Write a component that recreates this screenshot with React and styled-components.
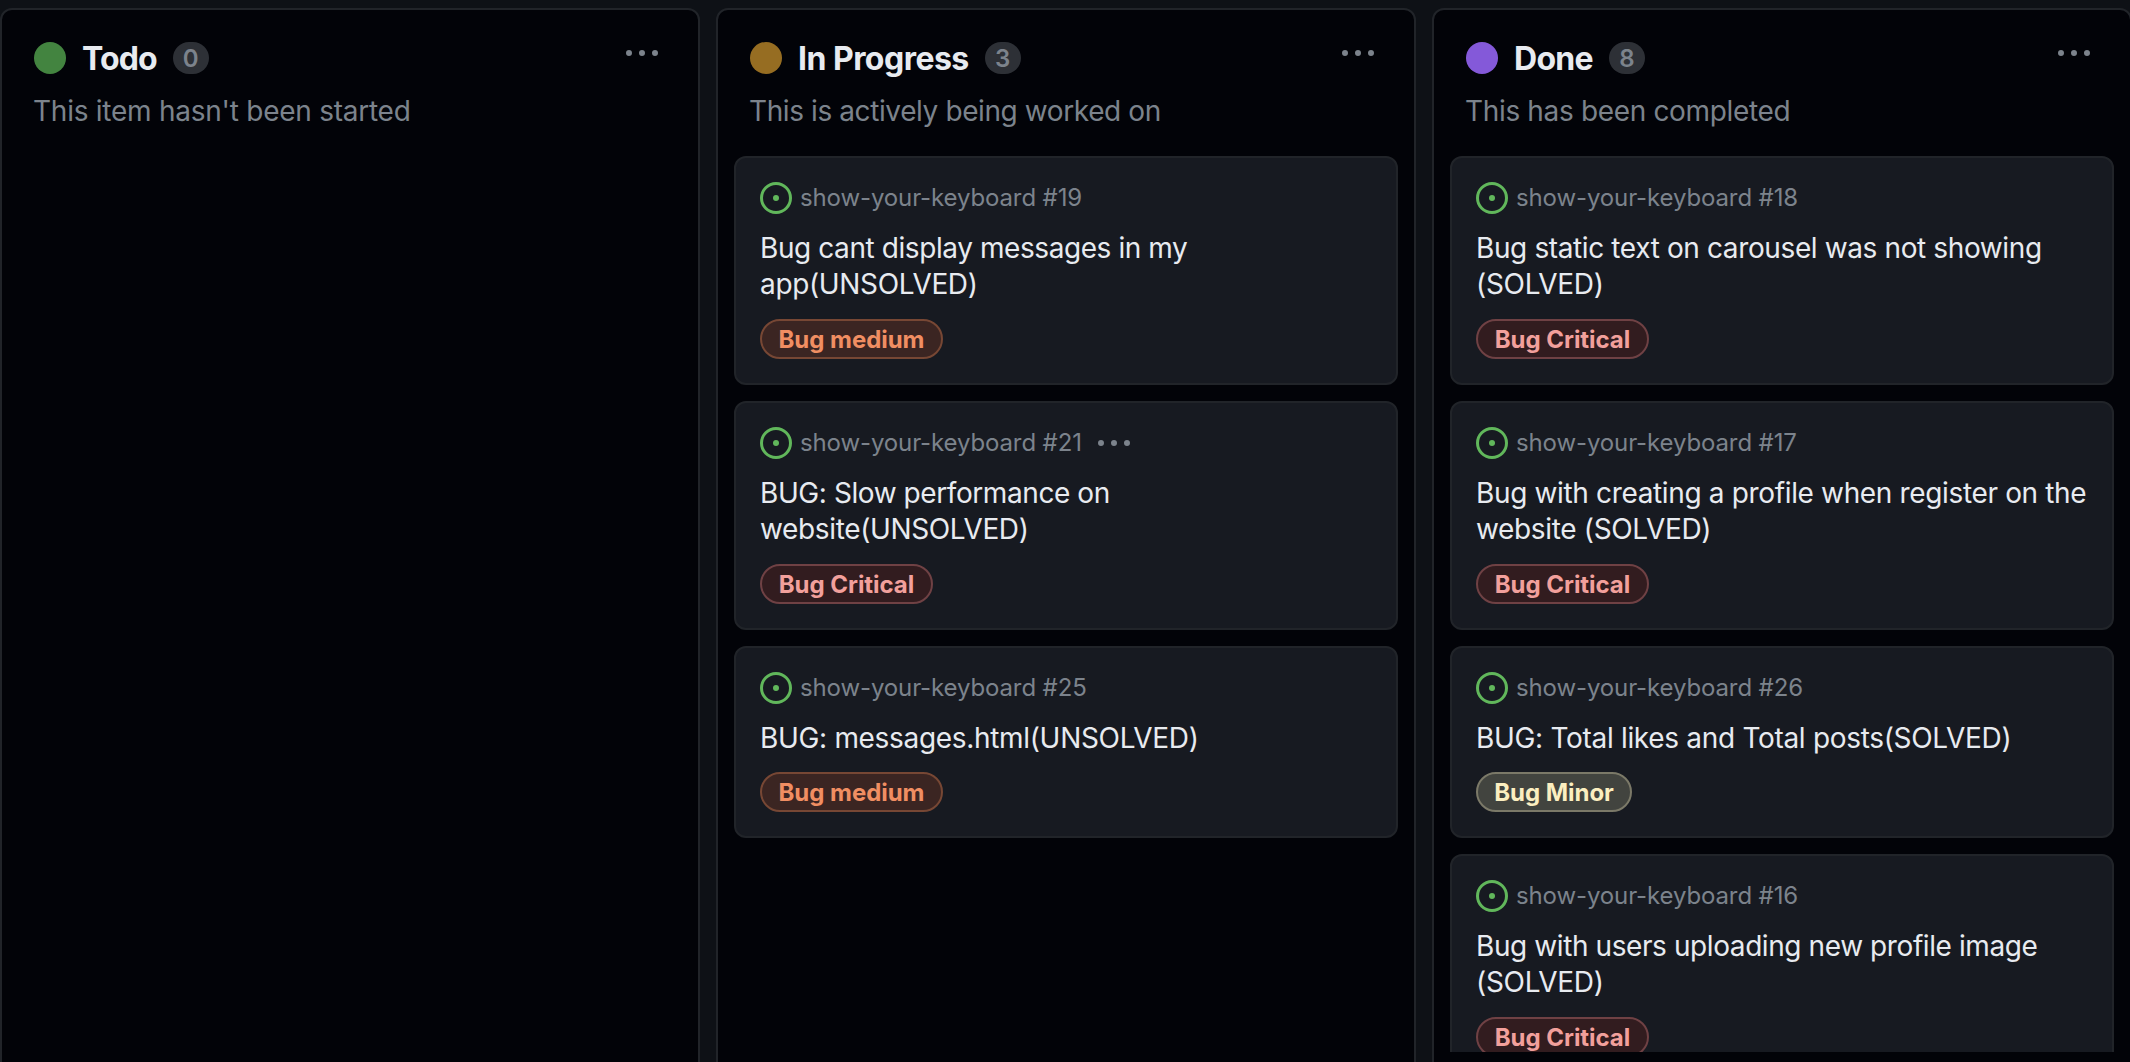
import React from 'react';
import styled, { createGlobalStyle } from 'styled-components';

const GlobalStyle = createGlobalStyle`
  * { box-sizing: border-box; }
  html, body { margin: 0; padding: 0; background: #0e1116; overflow: hidden; }
  body { font-family: Inter, "Liberation Sans", sans-serif; -webkit-font-smoothing: antialiased; }
`;

const Board = styled.main`
  display: flex;
  gap: 16px;
  width: 2132px;
  height: 1062px;
  padding-top: 8px;
`;

const Column = styled.section`
  display: flex;
  flex-direction: column;
  flex: 0 0 700px;
  min-width: 0;
  height: 1070px;
  background: #020308;
  border: 2px solid #212429;
  border-radius: 12px;
`;

const ColumnHeader = styled.header`
  display: flex;
  align-items: flex-start;
  justify-content: space-between;
  height: 64px;
  padding: 32px 40px 0 32px;
`;

const Heading = styled.div`
  display: flex;
  align-items: center;
  height: 32px;
`;

const StatusDot = styled.span`
  width: 32px;
  height: 32px;
  margin-right: 16px;
  border-radius: 50%;
  background: ${(p) => p.$color};
`;

const ColumnTitle = styled.h2`
  margin: 0 16px 0 0;
  padding-top: 2px;
  font-size: 32px;
  font-weight: 700;
  line-height: 32px;
  letter-spacing: ${(p) => p.$tracking}px;
  color: #e8ebf0;
  white-space: nowrap;
`;

const Count = styled.span`
  display: flex;
  align-items: center;
  justify-content: center;
  width: 36px;
  height: 32px;
  border-radius: 16px;
  background: #2d3036;
  color: #7c838c;
  font-size: 24px;
  font-weight: 600;
`;

const Description = styled.p`
  margin: 0;
  padding: 16px 32px 0 31px;
  height: 82px;
  font-size: 28px;
  line-height: 42px;
  letter-spacing: ${(p) => p.$tracking}px;
  color: #7c838c;
  white-space: nowrap;
`;

const Cards = styled.div`
  display: flex;
  flex-direction: column;
  gap: 16px;
  height: 896px;
  padding: 0 16px;
  overflow: hidden;
`;

const Card = styled.article`
  flex: none;
  height: ${(p) => (p.$lines > 1 ? 229 : 192)}px;
  padding: 24px;
  background: #171a21;
  border: 2px solid #212429;
  border-radius: 12px;
`;

const Meta = styled.div`
  display: flex;
  align-items: center;
  height: 32px;
  color: #7c838c;
  font-size: 24px;
  letter-spacing: -0.12px;
  white-space: nowrap;
`;

const MetaText = styled.span`
  margin: -2px 0 0 8px;
`;

const CardTitle = styled.h3`
  margin: 16px 0 ${(p) => (p.$lines > 1 ? 17 : 16)}px;
  font-size: 28px;
  font-weight: 400;
  line-height: 36px;
  color: #e8ebf0;
  white-space: nowrap;
`;

const TitleLine = styled.span`
  display: block;
  letter-spacing: ${(p) => p.$tracking}px;
`;

const tones = {
  medium: { bg: '#3b2522', border: '#774734', text: '#f08e62', width: 183 },
  critical: { bg: '#321c1f', border: '#6f4144', text: '#f2a09c', width: 173 },
  minor: { bg: '#42443f', border: '#7b7968', text: '#fbeec0', width: 156 },
};

const Label = styled.span`
  display: flex;
  align-items: center;
  justify-content: center;
  width: ${(p) => tones[p.$tone].width}px;
  height: 40px;
  padding-top: 1px;
  border: 2px solid ${(p) => tones[p.$tone].border};
  border-radius: 20px;
  background: ${(p) => tones[p.$tone].bg};
  color: ${(p) => tones[p.$tone].text};
  font-size: 24px;
  font-weight: 700;
  letter-spacing: -0.04px;
  line-height: 35px;
  white-space: nowrap;
`;

const Icon = styled.svg`
  display: block;
  flex: none;
  width: 32px;
  height: 32px;
`;

const MenuButton = styled.button`
  display: flex;
  align-items: center;
  padding: 0;
  border: 0;
  background: none;
  color: #7c838c;
  height: 32px;
  margin-top: -4px;
`;

const CardMenu = styled(MenuButton)`
  margin: 2px 0 0 16px;
`;

const IssueIcon = () => (
  <Icon viewBox="0 0 16 16" fill="#61b75b">
    <path d="M8 9.5a1.5 1.5 0 1 0 0-3 1.5 1.5 0 0 0 0 3Z" />
    <path d="M8 0a8 8 0 1 1 0 16A8 8 0 0 1 8 0ZM1.5 8a6.5 6.5 0 1 0 13 0 6.5 6.5 0 0 0-13 0Z" />
  </Icon>
);

const KebabIcon = () => (
  <Icon viewBox="0 0 16 16" fill="currentColor">
    <path d="M8 9a1.5 1.5 0 1 0 0-3 1.5 1.5 0 0 0 0 3ZM1.5 9a1.5 1.5 0 1 0 0-3 1.5 1.5 0 0 0 0 3Zm13 0a1.5 1.5 0 1 0 0-3 1.5 1.5 0 0 0 0 3Z" />
  </Icon>
);

const labelNames = { medium: 'Bug medium', critical: 'Bug Critical', minor: 'Bug Minor' };

const line = (text, tracking) => ({ text, tracking });

const columns = [
  {
    title: line('Todo', -0.9),
    count: 0,
    color: '#438440',
    description: line("This item hasn't been started", -0.25),
    cards: [],
  },
  {
    title: line('In Progress', -0.52),
    count: 3,
    color: '#966d22',
    description: line('This is actively being worked on', -0.4),
    cards: [
      { id: 19, lines: [line('Bug cant display messages in my', -0.42), line('app(UNSOLVED)', -0.34)], tone: 'medium' },
      {
        id: 21,
        lines: [line('BUG: Slow performance on', -0.42), line('website(UNSOLVED)', -0.36)],
        tone: 'critical',
        menu: true,
      },
      { id: 25, lines: [line('BUG: messages.html(UNSOLVED)', -0.32)], tone: 'medium' },
    ],
  },
  {
    title: line('Done', -0.7),
    count: 8,
    color: '#8459d9',
    description: line('This has been completed', -0.34),
    cards: [
      {
        id: 18,
        lines: [line('Bug static text on carousel was not showing', -0.38), line('(SOLVED)', -0.3)],
        tone: 'critical',
      },
      {
        id: 17,
        lines: [line('Bug with creating a profile when register on the', -0.35), line('website (SOLVED)', -0.34)],
        tone: 'critical',
      },
      { id: 26, lines: [line('BUG: Total likes and Total posts(SOLVED)', -0.31)], tone: 'minor' },
      {
        id: 16,
        lines: [line('Bug with users uploading new profile image', -0.41), line('(SOLVED)', -0.3)],
        tone: 'critical',
      },
    ],
  },
];

const IssueCard = ({ card }) => (
  <Card $lines={card.lines.length}>
    <Meta>
      <IssueIcon />
      <MetaText>show-your-keyboard #{card.id}</MetaText>
      {card.menu && (
        <CardMenu aria-label="Card menu">
          <KebabIcon />
        </CardMenu>
      )}
    </Meta>
    <CardTitle $lines={card.lines.length}>
      {card.lines.map((l) => (
        <TitleLine key={l.text} $tracking={l.tracking}>
          {l.text}
        </TitleLine>
      ))}
    </CardTitle>
    <Label $tone={card.tone}>{labelNames[card.tone]}</Label>
  </Card>
);

export default function App() {
  return (
    <>
      <GlobalStyle />
      <Board>
        {columns.map((column) => (
          <Column key={column.title.text}>
            <ColumnHeader>
              <Heading>
                <StatusDot $color={column.color} />
                <ColumnTitle $tracking={column.title.tracking}>{column.title.text}</ColumnTitle>
                <Count>{column.count}</Count>
              </Heading>
              <MenuButton aria-label="Column menu">
                <KebabIcon />
              </MenuButton>
            </ColumnHeader>
            <Description $tracking={column.description.tracking}>{column.description.text}</Description>
            <Cards>
              {column.cards.map((card) => (
                <IssueCard key={card.id} card={card} />
              ))}
            </Cards>
          </Column>
        ))}
      </Board>
    </>
  );
}
